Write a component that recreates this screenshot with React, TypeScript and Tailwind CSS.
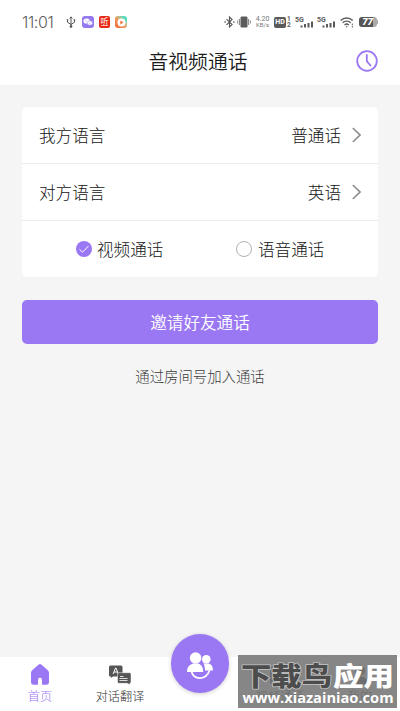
import { ReactNode } from "react";

const PURPLE = "#9b78f3";

function StatusBar() {
    return (
        <div className="flex h-11 items-center pl-[22px] pr-[22px] text-[#5c5c5c]">
            <span className="w-[44px] text-[16px] leading-none tracking-[-0.4px] font-['Inter'] font-light">11:01</span>

            {/* Notification icons */}
            <svg className="h-3 w-[10px]" viewBox="0 0 10 12" fill="none" stroke="#555" strokeWidth="1">
                <path d="M5 1v10M1.500 4v2.200L5 8.500l3.500-2.300V4M3.700 2.400 5 .8l1.300 1.600" />
                <circle cx="5" cy="10.500" r=".9" fill="#555" />
                <path d="M.8 4h1.500M7.700 4h1.500" strokeWidth="1.600" />
            </svg>
            <span className="ml-[6px] flex h-3 w-3 items-center justify-center rounded-[3px] bg-[#9478ee]">
                <svg className="h-2 w-[10px]" viewBox="0 0 10 8" fill="#fff">
                    <ellipse cx="3.600" cy="3" rx="3.200" ry="2.600" />
                    <ellipse cx="6.900" cy="5" rx="2.700" ry="2.200" stroke="#9478ee" strokeWidth=".5" />
                    <circle cx="3" cy="2.700" r=".5" fill="#9478ee" />
                    <circle cx="6.800" cy="5" r=".5" fill="#9478ee" />
                </svg>
            </span>
            <span className="ml-[5px] flex h-3 w-[11px] flex-col items-center rounded-[2px] bg-[#e52b18] font-['Noto_Sans_CJK_SC',sans-serif] text-[8px] font-normal leading-[9px] text-white">
                听
                <i className="block h-px w-[7px] bg-[#f8b5a8]" />
            </span>
            <span className="ml-[5px] flex h-3 w-3 items-center justify-center rounded-[3px] bg-linear-to-bl from-[#55dcbd] from-20% via-[#f0955c] via-55% to-[#ef602f]">
                <svg className="h-[9px] w-[9px]" viewBox="0 0 9 9">
                    <circle cx="4.500" cy="4.500" r="4" fill="#fff" />
                    <path d="M3.300 2.500 6.500 4.500 3.300 6.500Z" fill="#f17537" />
                </svg>
            </span>

            <div className="ml-auto flex items-center">
                <svg className="h-3 w-[11px]" viewBox="0 0 11 12" fill="none" stroke="#555" strokeWidth="1.100">
                    <path d="m2.500 3.200 5.600 5.400L5.500 11V1l2.600 2.400-5.600 5.400" />
                    <path d="M.5 6h1.300M9.200 6h1.300" strokeWidth="1.500" />
                </svg>
                <svg className="ml-[2px] h-3 w-[14px]" viewBox="0 0 14 12" fill="#5c5c5c">
                    <rect x="3.500" y=".5" width="7" height="11" rx="1.300" />
                    <rect x="1.800" y="3" width="1.200" height="6" opacity=".7" />
                    <rect x="11" y="3" width="1.200" height="6" opacity=".7" />
                    <rect x="0" y="4.500" width="1" height="3" opacity=".6" />
                    <rect x="13" y="4.500" width="1" height="3" opacity=".6" />
                </svg>
                <div className="ml-[4px] flex w-[15px] flex-col items-center font-['Roboto'] text-[7px] font-normal leading-[6.500px] text-[#777]">
                    <span>4.20</span>
                    <span className="text-[6px]">KB/s</span>
                </div>
                <div className="ml-[4px] flex h-[11px] w-3 items-center justify-center rounded-[2px] bg-[#5a5a5a] font-['Roboto'] text-[7px] font-bold text-white">HD</div>
                <div className="ml-px flex w-[4px] flex-col font-['Roboto'] text-[6.500px] font-bold leading-[6px]">
                    <span>1</span>
                    <span>2</span>
                </div>
                <SignalIcon className="ml-[4px]" />
                <SignalIcon className="ml-[3px]" />
                <svg className="ml-[4px] h-[11px] w-[14px]" viewBox="0 0 14 11" fill="none" stroke="#5a5a5a" strokeWidth="1.400">
                    <path d="M.7 3.500a8.500 8.500 0 0 1 12 0M2.700 5.800a5.700 5.700 0 0 1 8 0M4.600 8a3 3 0 0 1 4.200 0" />
                    <circle cx="6.700" cy="9.800" r=".7" fill="#5a5a5a" stroke="none" />
                    <path d="M12.300 6.500v4" strokeWidth="1" strokeDasharray="1.600 .8" />
                </svg>
                <div className="ml-[5px] flex h-[10px] w-[18px] items-center justify-center rounded-[3px] bg-linear-to-r from-[#555] from-78% to-[#aaa] to-78% pr-px font-['Roboto'] text-[9.500px] font-black italic leading-none text-white">
                    77
                </div>
                <i className="block h-1 w-px bg-[#aaa]" />
            </div>
        </div>
    );
}

function SignalIcon({ className }: { className?: string }) {
    return (
        <svg className={`h-3 w-[19px] ${className ?? ""}`} viewBox="0 0 19 12" fill="#5a5a5a">
            <text x="0" y="5.800" fontFamily="Roboto" fontSize="7" fontWeight="700">5G</text>
            <rect x="5.500" y="9.500" width="2" height="2" />
            <rect x="9" y="8" width="2" height="3.500" />
            <rect x="12.500" y="7" width="2" height="4.500" />
            <rect x="16" y="5.500" width="2" height="6" />
        </svg>
    );
}

function LanguageRow({ label, value }: { label: string; value: string }) {
    return (
        <div className="flex h-[57px] items-center border-b border-[#ebebeb] pl-[17px] pr-[17px] text-[16.600px]">
            <span>{label}</span>
            <span className="ml-auto">{value}</span>
            <svg className="ml-[11px] h-4 w-[9px]" viewBox="0 0 9 16" fill="none" stroke="#8c8c8c" strokeWidth="1.600">
                <path d="M.8 1 8 8 .8 15" />
            </svg>
        </div>
    );
}

function TabItem({ label, color, children }: { label: string; color: string; children?: ReactNode }) {
    return (
        <div className="flex w-20 flex-col items-center pt-[6px]">
            <div className="flex h-[23px] items-center">{children}</div>
            <span className="mt-px text-[12.200px] leading-[18px]" style={{ color }}>{label}</span>
        </div>
    );
}

export default function App() {
    return (
        <div className="relative flex h-[711px] w-[400px] flex-col overflow-hidden bg-[#f5f5f5] font-['Noto_Sans_CJK_SC',sans-serif] font-light text-[#141414]">
            <header className="h-[85px] bg-white">
                <StatusBar />
                <div className="flex h-[34px] items-center pr-[22px]">
                    <h1 className="flex-1 pl-[40px] text-center text-[19.800px] font-[350] leading-none text-[#1a1a1a]">音视频通话</h1>
                    <svg className="h-[22px] w-[22px]" viewBox="0 0 22 22" fill="none" stroke={PURPLE} strokeWidth="1.800">
                        <circle cx="11" cy="11" r="9.800" />
                        <path d="M10.800 4.800v6.400l3.700 4.300" strokeLinecap="round" />
                    </svg>
                </div>
            </header>

            <main className="flex flex-1 flex-col px-[22px] pt-[22px]">
                <section className="h-[170px] rounded-[5px] bg-white">
                    <LanguageRow label="我方语言" value="普通话" />
                    <LanguageRow label="对方语言" value="英语" />
                    <div className="flex h-[56px] items-center pl-[54px] text-[16.600px]">
                        <svg className="h-4 w-4" viewBox="0 0 16 16">
                            <circle cx="8" cy="8" r="8" fill={PURPLE} />
                            <path d="m3.500 8.300 3 2.900 6-6.200" fill="none" stroke="#fff" strokeWidth="1" />
                        </svg>
                        <span className="ml-[5px] w-[139px]">视频通话</span>
                        <i className="block h-4 w-4 rounded-full border border-[#b0b0b0]" />
                        <span className="ml-[6px]">语音通话</span>
                    </div>
                </section>

                <button className="mt-[23px] h-[44px] rounded-[5px] bg-[#9b78f3] text-[16.600px] font-[350] text-white">
                    邀请好友通话
                </button>
                <p className="mt-[20px] text-center text-[14.400px] leading-[24px] text-[#3c3c3c]">通过房间号加入通话</p>
            </main>

            <nav className="flex h-[54px] bg-white">
                <TabItem label="首页" color={PURPLE}>
                    <svg className="h-[21px] w-[18px]" viewBox="0 0 18 21" fill={PURPLE}>
                        <path d="M7.400.8a2.400 2.400 0 0 1 3.200 0l6.200 5.500A3.500 3.500 0 0 1 18 8.900V18a2.800 2.800 0 0 1-2.800 2.800H11v-5a2 2 0 0 0-4 0v5H2.800A2.800 2.800 0 0 1 0 18V8.900a3.500 3.500 0 0 1 1.200-2.600Z" />
                    </svg>
                </TabItem>
                <TabItem label="对话翻译" color="#333333">
                    <svg className="h-5 w-[22px]" viewBox="0 0 22 20">
                        <path d="M1.500.5h10.500a1.500 1.500 0 0 1 1.500 1.500v8a1.500 1.500 0 0 1-1.500 1.500H4l-2.200 1.500v-1.500A1.500 1.500 0 0 1 0 10V2A1.500 1.500 0 0 1 1.500.5Z" fill="#555" />
                        <path d="m4.200 9 2.300-6h.5l2.300 6M5 7h3.500" fill="none" stroke="#fff" strokeWidth="1" />
                        <path d="M9.800 7.700h11a1.300 1.300 0 0 1 1.200 1.300v8a1.300 1.300 0 0 1-1.200 1.300v1.400L18 18.300H9.800A1.300 1.300 0 0 1 8.500 17V9a1.300 1.300 0 0 1 1.300-1.300Z" fill="#555" stroke="#fff" strokeWidth=".5" />
                        <path d="M11 11.500h3.500M10.500 13.500h8M10.500 15.500h8" stroke="#eee" strokeWidth=".9" />
                    </svg>
                </TabItem>
                <div className="w-20" />
                <TabItem label="视频通话" color="#333333">
                    <svg className="h-[18px] w-5" viewBox="0 0 20 18" fill="#555">
                        <rect width="20" height="18" rx="2" />
                    </svg>
                </TabItem>
                <TabItem label="我的" color="#333333">
                    <svg className="h-5 w-[18px]" viewBox="0 0 18 20" fill="#555">
                        <circle cx="9" cy="5.500" r="5" />
                        <path d="M1 19c0-10 16-10 16 0Z" />
                    </svg>
                </TabItem>
            </nav>

            {/* Floating contacts button above the tab bar */}
            <button className="absolute left-[171px] top-[634px] flex h-[59px] w-[58px] items-center justify-center rounded-full bg-[#9b78f3] pt-[4px] shadow-[0_1px_4px_rgba(0,0,0,0.18)]">
                <svg className="h-[29px] w-[28px]" viewBox="0 0 28 29" fill="#fff">
                    <path d="M1 21c0-4 1.500-7 6-8.500h5.200c3.300 1.200 4.800 3.500 5 8.500Z" />
                    <circle cx="9.600" cy="7" r="5.800" />
                    <path d="M17.300 12.500h5.500c3 1 4.200 3.300 4.200 7h-8c0-2.800-.5-5.500-1.700-7Z" />
                    <circle cx="20.300" cy="8.300" r="4.300" />
                    <path d="M5.500 20.500c2.500 9 14.500 9 18-1" fill="none" stroke="#fff" strokeWidth="1.800" />
                </svg>
            </button>

            {/* Site watermark, the tabs show faintly through it */}
            <div className="absolute left-[238px] top-[655px] h-[53px] w-[159px] bg-[#727272]/86">
                <svg className="h-full w-full" viewBox="0 0 159 53">
                    <g fontFamily="Noto Sans CJK SC" fontSize="26" fontWeight="900" strokeLinejoin="round">
                        <text x="3" y="30.500" textLength="91" lengthAdjust="spacingAndGlyphs" fill="#4c4c4c" stroke="#c4c4c4" strokeWidth="1.600" paintOrder="stroke">下载鸟</text>
                        <text x="95" y="30.500" textLength="61" lengthAdjust="spacingAndGlyphs" fill="#fff">应用</text>
                    </g>
                    <text x="4.500" y="48" textLength="151" lengthAdjust="spacingAndGlyphs" fill="#fff" fontFamily="Open Sans" fontSize="14" fontWeight="700">www.xiazainiao.com</text>
                </svg>
            </div>
        </div>
    );
}
